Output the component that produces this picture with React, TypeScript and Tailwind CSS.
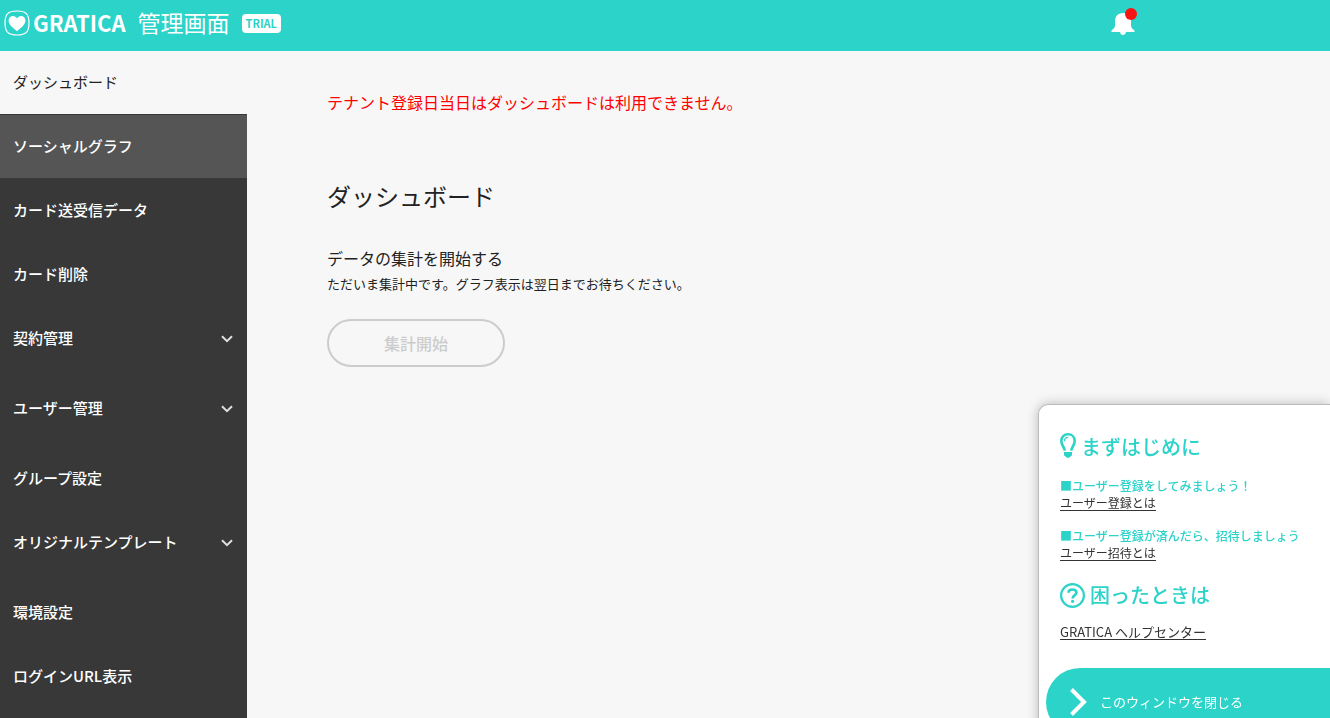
type NavItem = { label: string; state?: "active" | "hover"; expandable?: boolean };

const navItems: NavItem[] = [
  { label: "ダッシュボード", state: "active" },
  { label: "ソーシャルグラフ", state: "hover" },
  { label: "カード送受信データ" },
  { label: "カード削除" },
  { label: "契約管理", expandable: true },
  { label: "ユーザー管理", expandable: true },
  { label: "グループ設定" },
  { label: "オリジナルテンプレート", expandable: true },
  { label: "環境設定" },
  { label: "ログインURL表示" },
];

function HeartLogo() {
  return (
    <svg viewBox="0 0 26 26" className="size-[26px] shrink-0" aria-hidden="true">
      <path
        d="M13 1C22 1 25 4 25 13S22 25 13 25S1 22 1 13S4 1 13 1Z"
        fill="none"
        stroke="white"
        strokeWidth="1.2"
      />
      <path
        d="M13 21.2C8.5 17.8 4.6 14.6 4.6 10.6C4.6 7.8 6.6 6 8.9 6C10.7 6 12.2 6.9 13 8.5C13.8 6.9 15.3 6 17.1 6C19.4 6 21.4 7.8 21.4 10.6C21.4 14.6 17.5 17.8 13 21.2Z"
        fill="white"
      />
    </svg>
  );
}

function BellIcon() {
  return (
    <svg viewBox="0 0 24 24" className="size-6" aria-hidden="true">
      <path
        d="M12 1C7 1 4 4.600 4 9V13.500C4 15.500 2.500 17 0.500 18.400V20H9C9.300 21.800 10.400 23 12 23S14.700 21.800 15 20H23.500V18.400C21.500 17 20 15.500 20 13.500V9C20 4.600 17 1 12 1Z"
        fill="white"
      />
    </svg>
  );
}

function Chevron() {
  return (
    <svg viewBox="0 0 12 8" className="mt-[2px] h-2 w-3" aria-hidden="true">
      <path d="M1 1.200L6 6.200L11 1.200" fill="none" stroke="#e0e0e0" strokeWidth="2" />
    </svg>
  );
}

function BulbIcon() {
  return (
    <svg viewBox="0 0 16 25" className="mb-[3px] h-[25px] w-4" fill="none" aria-hidden="true">
      <path
        d="M4.800 17.600C4.600 14.400 1.300 12.400 1.300 7.900C1.300 4 4.200 1.300 8 1.300S14.700 4 14.700 7.900C14.700 12.400 11.400 14.400 11.200 17.600"
        stroke="currentColor"
        strokeWidth="2.600"
      />
      <path d="M4.500 8.200C4.500 5.800 5.900 4.500 8.200 4.400" stroke="currentColor" strokeWidth="1.300" />
      <path d="M4 19H12V21.800C12 22.600 11.400 23 10.600 23.200C10 24.300 9.200 24.700 8 24.700S6 24.300 5.400 23.200C4.600 23 4 22.600 4 21.800Z" fill="currentColor" />
    </svg>
  );
}

function QuestionIcon() {
  return (
    <svg viewBox="0 0 25 25" className="size-[25px]" fill="none" stroke="currentColor" aria-hidden="true">
      <circle cx="12.500" cy="12.500" r="11.400" strokeWidth="2.200" />
      <path
        d="M8.500 9.800C8.500 7.600 10.300 6.500 12.500 6.500S16.500 7.800 16.500 9.600C16.500 12.200 12.600 12.100 12.600 15.600"
        strokeWidth="2.600"
      />
      <circle cx="12.600" cy="18.300" r="1.600" fill="currentColor" stroke="none" />
    </svg>
  );
}

function Header() {
  return (
    <header className="flex h-[51px] items-start justify-between bg-[#2bd3c9] pl-1 text-white">
      <div className="flex pt-[10px]">
        <HeartLogo />
        <span className="ml-[3px] text-[22px] leading-6 font-bold">GRATICA</span>
        <h1 className="ml-3 text-[23px] leading-6">管理画面</h1>
        <span className="mt-1 ml-3 h-[19px] rounded bg-white px-1 text-[11px] leading-[19px] font-bold text-[#2bd3c9]">
          TRIAL
        </span>
      </div>
      <button type="button" aria-label="お知らせ" className="relative mt-3 mr-[195px]">
        <BellIcon />
        <span className="absolute -top-1 -right-[2px] size-3 rounded-full bg-[#f81414]" />
      </button>
    </header>
  );
}

function Sidebar() {
  return (
    <nav className="w-[247px] shrink-0 bg-[#383838] pb-1">
      <ul>
        {navItems.map((item) => (
          <li key={item.label} className={item.expandable ? "pb-[6px]" : ""}>
            <a
              href="#"
              className={
                item.state === "active"
                  ? "flex h-[63px] items-center bg-[#f7f7f7] px-[13px] text-[15px] text-[#222]"
                  : item.state === "hover"
                    ? "flex h-16 items-center border-t border-[#383838] bg-[#555] px-[13px] text-[15px] font-medium text-white"
                    : "flex h-16 items-center justify-between pr-[14px] pl-[13px] text-[15px] font-medium text-white"
              }
            >
              {item.label}
              {item.expandable && <Chevron />}
            </a>
          </li>
        ))}
      </ul>
    </nav>
  );
}

function HelpPanel() {
  return (
    <aside className="fixed top-[404px] right-0 w-[292px] rounded-tl-[10px] border-t border-l border-[#bbb] bg-white pt-[26px] shadow-[0_0_12px_rgba(0,0,0,0.25)]">
      <div className="pl-[21px]">
        <h2 className="flex h-8 items-center gap-[5px] text-[20px] font-medium text-[#2bd3c9]">
          <BulbIcon />
          まずはじめに
        </h2>
        <p className="mt-[14px] text-[12px] leading-[18px] font-medium text-[#2bd3c9]">■ユーザー登録をしてみましょう！</p>
        <a href="#" className="block w-fit border-b border-[#333] text-[12px] leading-[15px] text-[#333]">
          ユーザー登録とは
        </a>
        <p className="mt-4 text-[12px] leading-[18px] font-medium text-[#2bd3c9]">
          ■ユーザー登録が済んだら、招待しましょう
        </p>
        <a href="#" className="block w-fit border-b border-[#333] text-[12px] leading-[15px] text-[#333]">
          ユーザー招待とは
        </a>
        <h2 className="mt-[18px] flex h-8 items-center gap-[5px] text-[20px] font-medium text-[#2bd3c9]">
          <QuestionIcon />
          困ったときは
        </h2>
        <a href="#" className="mt-[13px] block w-fit border-b border-[#333] text-[13px] leading-[15px] text-[#333]">
          GRATICA ヘルプセンター
        </a>
      </div>
      <button
        type="button"
        className="mt-7 ml-[7px] flex h-[68px] w-[284px] items-center rounded-l-full bg-[#2bd3c9] pl-6 text-[13px] text-white"
      >
        <svg viewBox="0 0 17 28" className="h-7 w-[17px]" aria-hidden="true">
          <path d="M1.500 1.500L14 14L1.500 26.500" fill="none" stroke="white" strokeWidth="4" />
        </svg>
        <span className="ml-[13px]">このウィンドウを閉じる</span>
      </button>
    </aside>
  );
}

export default function App() {
  return (
    <div
      className="flex h-screen flex-col overflow-hidden bg-[#f7f7f7] font-['Noto_Sans_CJK_JP',sans-serif] text-[#222]"
      lang="ja"
    >
      <Header />
      <div className="flex grow">
        <Sidebar />
        <main className="grow px-20 pt-[39px]">
          <p className="text-[16px] leading-6 text-[#f00]">テナント登録日当日はダッシュボードは利用できません。</p>
          <h2 className="mt-16 text-[24px] leading-9">ダッシュボード</h2>
          <h3 className="mt-8 text-[16px] leading-6">データの集計を開始する</h3>
          <p className="mt-1 text-[13px] leading-5">ただいま集計中です。グラフ表示は翌日までお待ちください。</p>
          <button
            type="button"
            disabled
            className="mt-[25px] h-12 w-[178px] rounded-full border-2 border-[#ccc] text-[16px] font-medium text-[#ccc]"
          >
            集計開始
          </button>
        </main>
      </div>
      <HelpPanel />
    </div>
  );
}
